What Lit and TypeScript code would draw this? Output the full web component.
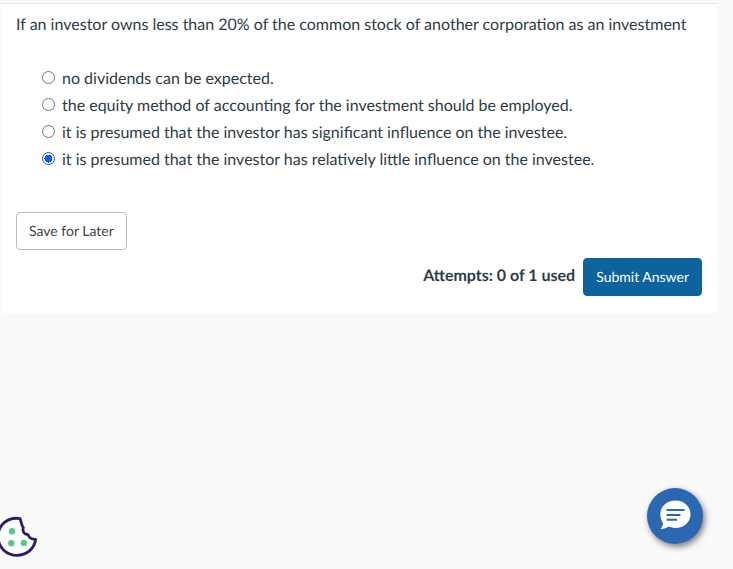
import { LitElement, html, css } from "lit";
import { customElement, state } from "lit/decorators.js";

const CHOICES = [
  "no dividends can be expected.",
  "the equity method of accounting for the investment should be employed.",
  "it is presumed that the investor has significant influence on the investee.",
  "it is presumed that the investor has relatively little influence on the investee.",
];

@customElement("app-root")
export class AppRoot extends LitElement {
  static styles = css`
    :host {
      display: block;
      box-sizing: border-box;
      min-height: 100vh;
      padding: 3px 16px 0 1px;
      background: #f9f9f9;
      color: #2d3b45;
      font: 16px/27px Lato, sans-serif;
      text-rendering: geometricPrecision;
    }
    .panel {
      background: #fff;
      border-top: 1px solid #e6e8e9;
      padding: 7px 15px 17px;
    }
    .question {
      margin: 0;
    }
    .choices {
      display: flex;
      flex-direction: column;
      margin: 27px 0 39px;
      padding: 0 0 0 26px;
      border: 0;
    }
    .choice {
      display: flex;
      align-items: center;
      gap: 7px;
    }
    .radio {
      appearance: none;
      box-sizing: border-box;
      flex: none;
      width: 13px;
      height: 13px;
      margin: 0 0 2px;
      border: 1px solid #767676;
      border-radius: 50%;
      background: #fff;
    }
    .radio:checked {
      border-color: #0b5cff;
      background: radial-gradient(circle, #0b5cff 4px, #fff 4px);
    }
    .btn {
      box-sizing: border-box;
      height: 38px;
      padding: 0 12px;
      border: 1px solid #b8babc;
      border-radius: 4px;
      background: #fff;
      color: #444;
      font: 14px/20px Lato, sans-serif;
      text-rendering: inherit;
    }
    .primary {
      border-color: #0d639e;
      background: #0d639e;
      color: #fff;
    }
    .submit-row {
      display: flex;
      justify-content: flex-end;
      align-items: center;
      gap: 8px;
      margin-top: 8px;
    }
    .attempts {
      font-weight: 700;
      padding-bottom: 4px;
    }
    .save-row {
      display: flex;
    }
    .cookie,
    .chat {
      position: fixed;
      padding: 0;
      border: 0;
      background: none;
    }
    .cookie {
      left: -4px;
      bottom: 11px;
      width: 42px;
      height: 42px;
    }
    .chat {
      right: 30px;
      bottom: 25px;
      width: 56px;
      height: 56px;
      border-radius: 50%;
      background: #2b68b2;
      box-shadow: 2px 3px 6px rgba(0, 0, 0, 0.5);
    }
    .icon {
      display: block;
      width: 100%;
      height: 100%;
    }
  `;

  @state() private selected = 3;

  render() {
    return html`
      <main class="panel">
        <p class="question" id="question">
          If an investor owns less than 20% of the common stock of another corporation as an investment
        </p>
        <fieldset class="choices" aria-labelledby="question">
          ${CHOICES.map(
            (text, i) => html`<label class="choice">
              <input
                class="radio"
                type="radio"
                name="answer"
                .checked=${i === this.selected}
                @change=${() => (this.selected = i)}
              />
              <span>${text}</span>
            </label>`
          )}
        </fieldset>
        <div class="save-row"><button class="btn" type="button">Save for Later</button></div>
        <div class="submit-row">
          <span class="attempts">Attempts: 0 of 1 used</span>
          <button class="btn primary" type="button">Submit Answer</button>
        </div>
      </main>
      <button class="cookie" type="button" aria-label="Cookie preferences">
        <svg class="icon" viewBox="0 0 42 42">
          <path
            d="M24.200 2.600C12 .5 2 9 2 20.500c0 10.700 8.500 18.800 19 18.800 9.500 0 17.500-6.500 18.700-16C36 23.500 33 21.800 32 18.600 28 18.200 26.300 15.500 27.300 11.500 25.300 9.500 25.300 6 24.200 2.600Z"
            fill="#fff"
            stroke="#2a1f63"
            stroke-width="2.800"
            stroke-linejoin="round"
          />
          <g fill="#56c98d">
            <circle cx="16" cy="15.300" r="3.200" />
            <circle cx="15.300" cy="27.200" r="3.200" />
            <circle cx="27.800" cy="26.900" r="3.200" />
          </g>
        </svg>
      </button>
      <button class="chat" type="button" aria-label="Open chat">
        <svg class="icon" viewBox="0 0 56 56">
          <path
            d="M28.500 12.500C37 12.500 43.500 18.500 43.500 26.300S37 40 28.500 40c-2.500 0-4.800-.5-6.800-1.400C19.500 40.500 16.500 41.200 13.500 41c1.600-1.800 2.400-3.700 2.400-6C14.300 32.500 13.300 29.500 13.300 26.300 13.300 18.500 20 12.500 28.500 12.500Z"
            fill="#fff"
          />
          <path d="M19.500 22h18M19.500 27h14M19.500 31.700h10.500" stroke="#2b68b2" stroke-width="2" />
        </svg>
      </button>
    `;
  }
}
